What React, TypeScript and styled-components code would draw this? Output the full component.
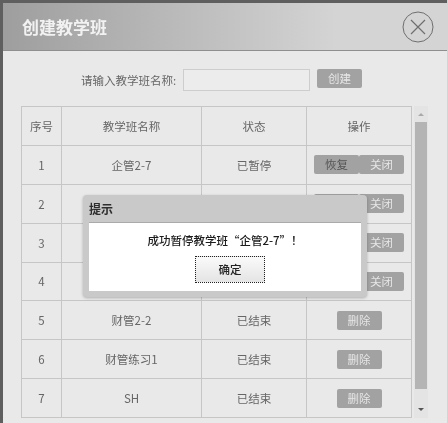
import * as React from 'react';
import styled, {createGlobalStyle} from 'styled-components';

// rows 2-4: name, state and first button are covered by the alert
const rows = [
    {no: '1', name: '企管2-7', state: '已暂停', kind: 'paused'},
    {no: '2', name: '', state: '', kind: 'running'},
    {no: '3', name: '', state: '', kind: 'running'},
    {no: '4', name: '', state: '', kind: 'running'},
    {no: '5', name: '财管2-2', state: '已结束', kind: 'ended'},
    {no: '6', name: '财管练习1', state: '已结束', kind: 'ended'},
    {no: '7', name: 'SH', state: '已结束', kind: 'ended'},
];

export default function App() {
    return (
        <Page>
            <GlobalStyle />
            <Dialog>
                <Header>
                    <Title>创建教学班</Title>
                    <CloseIcon viewBox="0 0 32 32">
                        <circle cx="16" cy="16" r="15" fill="none" stroke="#6f6f6f" strokeWidth="1" />
                        <path d="M9 9 L23 23 M23 9 L9 23" fill="none" stroke="#6f6f6f" strokeWidth="1.2" />
                    </CloseIcon>
                </Header>
                <Form>
                    <FormLabel>请输入教学班名称:</FormLabel>
                    <NameInput />
                    <Button>创建</Button>
                </Form>
                <TableWrap>
                    <Table>
                        <colgroup>
                            <col style={{width: 40}} />
                            <col style={{width: 140}} />
                            <col style={{width: 105}} />
                            <col style={{width: 105}} />
                        </colgroup>
                        <thead>
                            <tr>
                                <th>序号</th>
                                <th>教学班名称</th>
                                <th>状态</th>
                                <th>操作</th>
                            </tr>
                        </thead>
                        <tbody>
                            {rows.map(r => (
                                <tr key={r.no}>
                                    <td>{r.no}</td>
                                    <td>{r.name}</td>
                                    <td>{r.state}</td>
                                    <td>
                                        {r.kind === 'ended' ? (
                                            <Button>删除</Button>
                                        ) : (
                                            <ButtonPair>
                                                <Button $dark>{r.kind === 'paused' ? '恢复' : ''}</Button>
                                                <Button>关闭</Button>
                                            </ButtonPair>
                                        )}
                                    </td>
                                </tr>
                            ))}
                        </tbody>
                    </Table>
                    <Scrollbar>
                        <Arrow $down={false} />
                        <Thumb />
                        <Arrow $down={true} />
                    </Scrollbar>
                </TableWrap>
            </Dialog>
            <Alert>
                <AlertTitle>提示</AlertTitle>
                <AlertBody>
                    <AlertText>成功暂停教学班“企管2-7”！</AlertText>
                    <OkButton>确定</OkButton>
                </AlertBody>
            </Alert>
        </Page>
    )
}

const GlobalStyle = createGlobalStyle`
    html, body{
        margin: 0;
        padding: 0;
        background: #6a6a6a;
    }
`

const Page = styled.div`
    position: relative;
    width: 447px;
    height: 423px;
    overflow: hidden;
    box-sizing: border-box;
    padding: 3px 0 0 3px;
    background: #5f5f5f;
    font-family: "Noto Sans CJK SC", "Liberation Sans", sans-serif;
    font-size: 11.5px;
    color: #666;
    filter: blur(0.35px);
`

const Dialog = styled.div`
    height: 100%;
    background: #e9e9e9;
`

const Header = styled.div`
    height: 48px;
    box-sizing: border-box;
    display: flex;
    align-items: center;
    justify-content: space-between;
    padding: 0 13px 0 19px;
    background: linear-gradient(to right, #9e9e9e, #d4d4d4 75%);
    border-bottom: 1px solid #8f8f8f;
`

const Title = styled.div`
    font-size: 17px;
    font-weight: 700;
    color: #f2f2f2;
`

const CloseIcon = styled.svg`
    width: 32px;
    height: 32px;
`

const Form = styled.div`
    height: 55px;
    box-sizing: border-box;
    display: flex;
    align-items: flex-start;
    padding: 18px 0 0 78px;
`

const FormLabel = styled.label`
    width: 102px;
    line-height: 22px;
`

const NameInput = styled.div`
    width: 127px;
    height: 22px;
    box-sizing: border-box;
    margin-right: 7px;
    background: #ececec;
    border: 1px solid #cdcdcd;
`

const Button = styled.span<{$dark?: boolean}>`
    display: inline-block;
    width: 45px;
    height: 19px;
    line-height: 19px;
    vertical-align: middle;
    border-radius: 2px;
    background: #a2a2a2;
    color: ${p => p.$dark ? '#555' : '#e6e6e6'};
    text-align: center;
`

const ButtonPair = styled.div`
    display: flex;
    justify-content: center;
`

const TableWrap = styled.div`
    display: flex;
    margin-left: 18px;
`

const Table = styled.table`
    flex: none;
    width: 390px;
    table-layout: fixed;
    border-collapse: collapse;
    font-size: 11.5px;
    color: #666;
    th, td{
        height: 37.875px;
        padding: 0;
        border: 1px solid #c6c6c6;
        text-align: center;
        font-weight: 400;
    }
`

const Scrollbar = styled.div`
    width: 14px;
    margin-left: 2px;
    display: flex;
    flex-direction: column;
    align-items: center;
    background: #e4e4e4;
`

const Arrow = styled.div<{$down: boolean}>`
    flex: none;
    width: 0;
    height: 0;
    margin: ${p => p.$down ? '19px 0 7px' : '7px 0 6px'};
    border-left: 3px solid transparent;
    border-right: 3px solid transparent;
    border-top: ${p => p.$down ? '3px solid #555' : 'none'};
    border-bottom: ${p => p.$down ? 'none' : '3px solid #aaa'};
`

const Thumb = styled.div`
    flex: 1;
    width: 12px;
    background: #b4b4b4;
`

const Alert = styled.div`
    position: absolute;
    left: 83px;
    top: 195px;
    width: 284px;
    height: 102px;
    box-sizing: border-box;
    padding: 0 6px 6px;
    display: flex;
    flex-direction: column;
    border-radius: 4px;
    background: #c9c9c9;
    box-shadow: 0 1px 3px rgba(0, 0, 0, .25);
`

const AlertTitle = styled.div`
    height: 27px;
    line-height: 27px;
    font-size: 12px;
    font-weight: 700;
    color: #2e2e2e;
`

const AlertBody = styled.div`
    flex: 1;
    display: flex;
    flex-direction: column;
    align-items: center;
    box-sizing: border-box;
    padding-top: 8px;
    background: #fff;
    border-top: 1px solid #aaa;
`

const AlertText = styled.div`
    line-height: 18px;
    font-weight: 500;
    color: #1c1c1c;
`

const OkButton = styled.div`
    width: 70px;
    height: 27px;
    box-sizing: border-box;
    margin: 7px 0 0 10px;
    line-height: 25px;
    text-align: center;
    font-weight: 500;
    color: #222;
    background: linear-gradient(#fafafa, #e4e4e4);
    border: 1px dotted #222;
`
